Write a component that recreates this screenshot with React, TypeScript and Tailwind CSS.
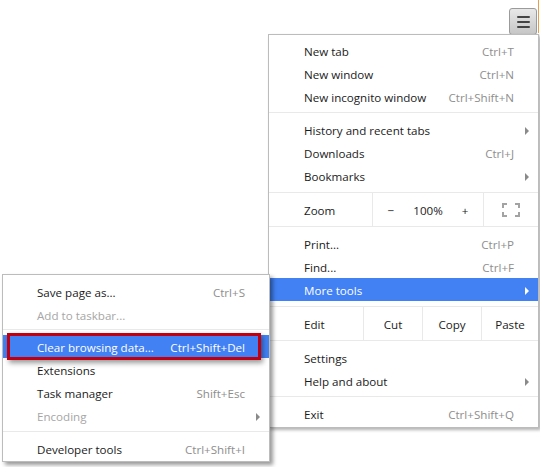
import React from 'react';
import { clsx as cn } from 'clsx';

const Arrow = ({ light }: { light?: boolean }) => (
  <span
    className={cn(
      'block w-0 h-0 border-y-[4px] border-y-transparent border-l-[4px]',
      light ? 'border-l-white' : 'border-l-[#8a8a8a]'
    )}
  />
);

interface ItemProps {
  label: string;
  shortcut?: string;
  arrow?: boolean;
  active?: boolean;
  disabled?: boolean;
  inset?: 'main' | 'sub';
}

const Item = ({ label, shortcut, arrow, active, disabled, inset = 'main' }: ItemProps) => (
  <div
    className={cn(
      'flex items-center h-[23px] pt-[2px] pr-[9px]',
      inset === 'main' ? 'pl-[35px]' : 'pl-[34px]',
      active ? 'bg-[#4281f4] text-white' : disabled ? 'text-[#a6a6a6]' : 'text-[#1b1b1b]'
    )}
  >
    <span className="flex-1 whitespace-nowrap">{label}</span>
    {shortcut && (
      <span className={cn('whitespace-nowrap', active ? 'text-white' : 'text-[#8e8e8e]')}>{shortcut}</span>
    )}
    <span className="ml-[11px] w-[4px] flex items-center">{arrow && <Arrow light={active} />}</span>
  </div>
);

const Sep = ({ top = 4 }: { top?: number }) => (
  <div className={cn('h-px bg-[#e9e9e9] mb-[5px]', top === 3 ? 'mt-[3px]' : 'mt-[4px]')} />
);

const FullscreenIcon = () => (
  <svg width="18" height="14" viewBox="0 0 18 14" fill="none" stroke="#a3a3a3" strokeWidth="2">
    <path d="M1 5V1H5" />
    <path d="M13 1H17V5" />
    <path d="M17 9V13H13" />
    <path d="M5 13H1V9" />
  </svg>
);

export default function App() {
  return (
    <div className="relative w-[540px] h-[467px] bg-white overflow-hidden font-['Open_Sans',sans-serif] text-[11.6px] leading-none">
      {/* toolbar edge */}
      <div className="absolute left-[538px] top-0 w-px h-[33px] bg-[#e6a04a]" />

      {/* hamburger button */}
      <div className="absolute left-[509px] top-[8px] w-[28px] h-[27px] rounded-[3px] border border-[#9b9b9b] bg-gradient-to-b from-[#e8e8e8] to-[#c6c6c6] flex flex-col items-center justify-center gap-[3px]">
        <span className="block w-[13px] h-[2px] rounded-full bg-[#444]" />
        <span className="block w-[13px] h-[2px] rounded-full bg-[#444]" />
        <span className="block w-[13px] h-[2px] rounded-full bg-[#444]" />
      </div>

      {/* main menu */}
      <div className="absolute left-[268px] top-[34px] w-[271px] h-[394px] bg-white border border-[#bcbcbc] shadow-[2px_2px_3px_rgba(0,0,0,0.3)] pt-[4px] pb-[2px]">
        <Item label="New tab" shortcut="Ctrl+T" />
        <Item label="New window" shortcut="Ctrl+N" />
        <Item label="New incognito window" shortcut="Ctrl+Shift+N" />
        <Sep />
        <Item label="History and recent tabs" arrow />
        <Item label="Downloads" shortcut="Ctrl+J" />
        <Item label="Bookmarks" arrow />

        <div className="mt-[5px] flex h-[35px] pt-[2px] border-y border-[#e9e9e9] text-[#1b1b1b]">
          <div className="w-[103px] pl-[35px] flex items-center">Zoom</div>
          <div className="w-[111px] -mt-[2px] pt-[2px] border-l border-[#e9e9e9] flex items-center justify-center gap-[19px]">
            <span>−</span>
            <span>100%</span>
            <span>+</span>
          </div>
          <div className="flex-1 -mt-[2px] border-l border-[#e9e9e9] flex items-center justify-center">
            <FullscreenIcon />
          </div>
        </div>

        <div className="mt-[5px]">
          <Item label="Print..." shortcut="Ctrl+P" />
          <Item label="Find..." shortcut="Ctrl+F" />
          <Item label="More tools" arrow active />
        </div>

        <div className="mt-[5px] flex h-[35px] border-y border-[#e9e9e9] text-[#1b1b1b]">
          <div className="w-[94px] pl-[35px] pt-[2px] flex items-center">Edit</div>
          <div className="w-[59px] pt-[2px] border-l border-[#e9e9e9] flex items-center justify-center">Cut</div>
          <div className="w-[59px] pt-[2px] border-l border-[#e9e9e9] flex items-center justify-center">Copy</div>
          <div className="flex-1 pt-[2px] border-l border-[#e9e9e9] flex items-center justify-center">Paste</div>
        </div>

        <div className="mt-[5px]">
          <Item label="Settings" />
          <Item label="Help and about" arrow />
        </div>
        <Sep />
        <Item label="Exit" shortcut="Ctrl+Shift+Q" />
      </div>

      {/* more tools submenu */}
      <div className="absolute left-[2px] top-[274px] w-[268px] h-[188px] bg-white border border-[#bcbcbc] shadow-[3px_3px_4px_rgba(0,0,0,0.4)] pt-[5px] pb-[1px]">
        <Item inset="sub" label="Save page as..." shortcut="Ctrl+S" />
        <Item inset="sub" label="Add to taskbar..." disabled />
        <Sep top={3} />
        <Item inset="sub" label="Clear browsing data..." shortcut="Ctrl+Shift+Del" active />
        <Item inset="sub" label="Extensions" />
        <Item inset="sub" label="Task manager" shortcut="Shift+Esc" />
        <Item inset="sub" label="Encoding" arrow disabled />
        <Sep />
        <Item inset="sub" label="Developer tools" shortcut="Ctrl+Shift+I" />

        {/* highlight callout */}
        <div className="absolute left-[4px] top-[58px] w-[254px] h-[27px] border-[3px] border-[#c00010] shadow-[2px_3px_5px_rgba(0,0,0,0.4)]" />
      </div>
    </div>
  );
}
